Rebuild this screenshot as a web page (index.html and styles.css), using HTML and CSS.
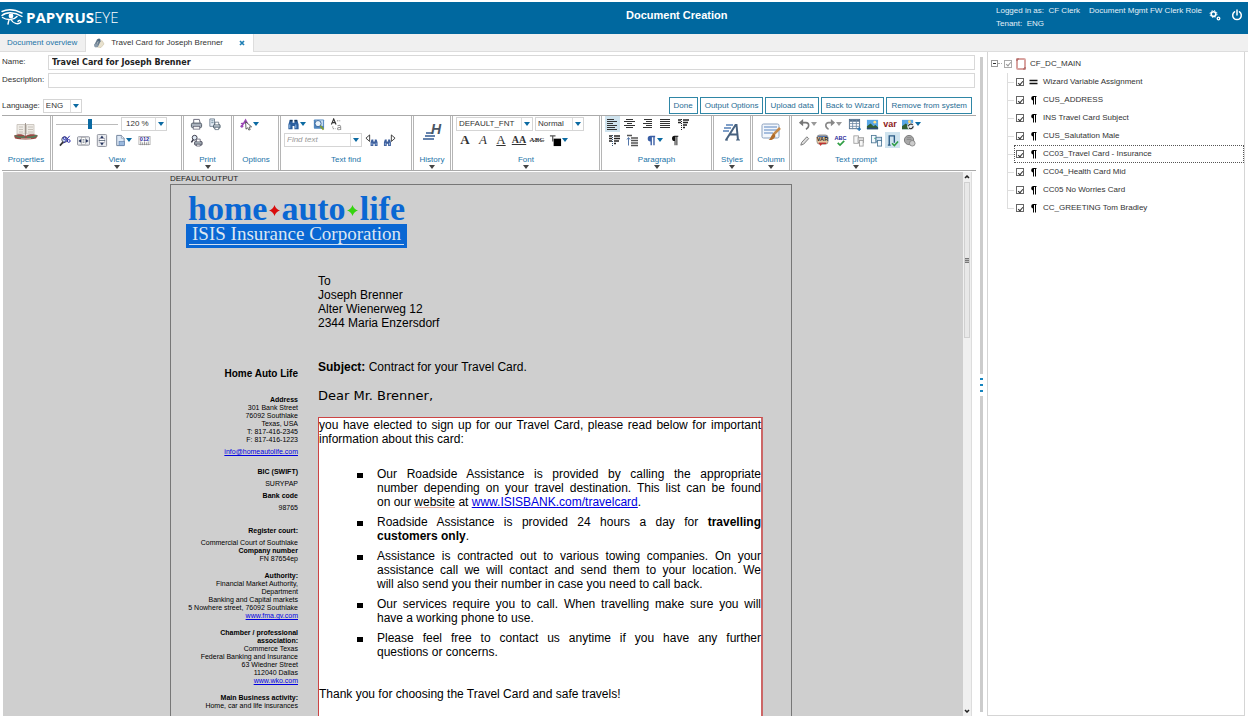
FILE: index.html
```html
<!DOCTYPE html>
<html lang="en">
<head>
<meta charset="utf-8">
<title>Document Creation</title>
<link rel="stylesheet" href="styles.css">
</head>
<body>
<header class="header">
  <div class="brand">
    <svg class="brand-eye" viewBox="0 0 22 18" fill="none" stroke="#fff" stroke-width="1.4" stroke-linecap="round"><path d="M1 3.500C6 1 13 1 21 5M1 7.500C5 4 13 3.500 21 8.500M1.500 9.500C6 12.500 13 12 16 8.500M8 11.500L7 16M10 11.500C12 15.500 17 17 19.500 14.500C20.500 12.500 17.500 11.500 17 13.500"/><circle cx="10" cy="8" r="2.400" fill="#fff" stroke="none"/></svg>
    <span class="brand-name">PAPYRUS<span class="brand-thin">EYE</span></span>
  </div>
  <h1 class="title">Document Creation</h1>
  <div class="user">
    <div class="user-text">
      <div class="user-line"><span>Logged in as:&nbsp; CF Clerk</span><span>Document Mgmt FW Clerk Role</span></div>
      <div>Tenant:&nbsp; ENG</div>
    </div>
    <button class="head-btn" aria-label="Settings"><svg width="12" height="12" viewBox="0 0 12 12" fill="none" stroke="#fff"><circle cx="4.500" cy="5" r="2.300" stroke-width="1.600"/><circle cx="4.500" cy="5" r="3.500" stroke-width="1" stroke-dasharray="1.400 1.350"/><circle cx="9.500" cy="9.500" r="1.300" stroke-width="1.300"/></svg></button>
    <button class="head-btn" aria-label="Log out"><svg width="12" height="12" viewBox="0 0 12 12" fill="none" stroke="#fff" stroke-width="1.500" stroke-linecap="round"><path d="M3.500 2.800A4.300 4.300 0 1 0 8.500 2.800M6 1V6"/></svg></button>
  </div>
</header>

<nav class="tabs">
  <a class="tab" href="#overview">Document overview</a>
  <div class="tab tab-active">
    <svg width="12" height="12" viewBox="0 0 12 12"><path d="M5 6L9 3.500L11 7L8 10.500L4 10Z" fill="#e9e2cf" stroke="#c9bfa5" stroke-width=".6"/><path d="M2 8.500L5 2.500M4 9.500L7 3.500" stroke="#6a7d8f" stroke-width="1.800"/><circle cx="3" cy="8.500" r="1.900" fill="#8a9bab"/><circle cx="6" cy="3" r="1.600" fill="#52687c"/></svg>
    <a class="tab-link" href="#travel">Travel Card for Joseph Brenner</a>
    <button class="tab-close" aria-label="Close tab"><svg width="6" height="6" viewBox="0 0 6 6" stroke="#1f7fb5" stroke-width="1.700"><path d="M1 1L5 5M5 1L1 5"/></svg></button>
  </div>
</nav>

<main class="work">
  <section class="editor">
    <form class="form">
      <label for="name">Name:</label>
      <input class="field field-name" id="name" type="text" value="Travel Card for Joseph Brenner">
      <label for="desc">Description:</label>
      <input class="field" id="desc" type="text">
    </form>
    <div class="actions">
      <label for="lang">Language:</label>
      <span class="combo combo-lang"><select id="lang"><option>ENG</option></select><svg class="arrow" viewBox="0 0 6 4"><path d="M0 0H6L3 4Z"/></svg></span>
      <div class="action-list">
        <button class="action">Done</button>
        <button class="action">Output Options</button>
        <button class="action">Upload data</button>
        <button class="action">Back to Wizard</button>
        <button class="action">Remove from system</button>
      </div>
    </div>

    <div class="ribbon">
      <section class="group">
        <div class="big"><button class="big-btn" aria-label="Properties"><svg width="26" height="18" viewBox="0 0 26 18"><path d="M4 1.500H12V11H4ZM13.500 1.500H21V11H13.500Z" fill="#eeebe6" stroke="#c4beb5" stroke-width=".8"/><path d="M12.500 0V13" stroke="#8b8178" stroke-width=".8"/><path d="M6 4H10M15 4H20M6 6.500H10M15 6.500H20M6 9H10M15 9H20" stroke="#bdb6ad" stroke-width=".8"/><path d="M1 12.500C6 10.500 9 11 12.500 13C16 11 20 10.500 25 12.500L23 15.500C17 17 8 17 2 15.500Z" fill="#9a4a44"/><path d="M2 12.500C5 14.500 9 14.500 12 13.800M14 14C18 14.800 21 14 24 12.500" fill="none" stroke="#4f7f5c" stroke-width="1.500"/><path d="M8 16H18" stroke="#d8cfc4"/></svg></button></div>
        <h2 class="label">Properties</h2><svg class="more" viewBox="0 0 6 4"><path d="M0 0H6L3 4Z"/></svg>
      </section>
      <section class="group">
        <div class="row view-row">
          <input class="slider" type="range" min="0" max="220" value="120" aria-label="Zoom">
          <span class="combo combo-zoom"><select aria-label="Zoom level"><option>120 %</option></select><svg class="arrow" viewBox="0 0 6 4"><path d="M0 0H6L3 4Z"/></svg></span>
        </div>
        <div class="row">
          <button class="icon" aria-label="Zoom percent"><svg viewBox="0 0 14 14"><path d="M1 12.500L5 8" stroke="#333" stroke-width="1.800"/><circle cx="6" cy="6" r="3" fill="#cfe0f5" stroke="#445"/><path d="M11.500 2L5 10" stroke="#2222aa"/><circle cx="6" cy="4.500" r="1.500" fill="none" stroke="#2222aa"/><circle cx="10.500" cy="7.500" r="1.500" fill="none" stroke="#2222aa"/></svg></button>
          <button class="icon" aria-label="Fit width"><svg viewBox="0 0 14 14"><rect x=".5" y="3" width="13" height="9" rx="1" fill="#e9ebef" stroke="#8a8f99"/><rect x="5" y="4" width="4" height="7" fill="#fff" stroke="#999" stroke-width=".6"/><path d="M1.500 7.500L4.500 5.500V9.500ZM12.500 7.500L9.500 5.500V9.500Z" fill="#26355f"/><path d="M6 6H8M6 7.500H8M6 9H8" stroke="#456" stroke-width=".7"/></svg></button>
          <button class="icon" aria-label="Fit height"><svg viewBox="0 0 14 14"><rect x="2.500" y=".5" width="10" height="13" rx="1" fill="#e9ebef" stroke="#8a8f99"/><rect x="4.500" y="5" width="6" height="4" fill="#fff" stroke="#99a" stroke-width=".6"/><path d="M7.500 1.500L9.500 4.500H5.500ZM7.500 12.500L9.500 9.500H5.500Z" fill="#26355f"/><path d="M4 7H11" stroke="#456" stroke-width=".8"/></svg></button>
          <button class="icon icon-wide" aria-label="Page view"><svg viewBox="0 0 14 14"><path d="M4 1.500H9L12 4.500V12.500H4Z" fill="#dde8f5" stroke="#6d7f99"/><path d="M9 1.500V4.500H12" fill="#fff" stroke="#6d7f99" stroke-width=".7"/><rect x="6.500" y="8" width="6" height="4.500" fill="#9bb9dd" stroke="#5577a5" stroke-width=".6"/></svg><svg class="arrow" viewBox="0 0 6 4"><path d="M0 0H6L3 4Z"/></svg></button>
          <button class="icon" aria-label="Ruler"><svg viewBox="0 0 14 14"><rect x="1" y="2.500" width="12" height="9" fill="#fff" stroke="#999" stroke-width=".7"/><path d="M3 12V8M5 12V9M7 12V8M9 12V9M11 12V8" stroke="#777" stroke-width=".8"/><text class="glyph-ruler" x="7" y="7">012</text></svg></button>
        </div>
        <h2 class="label">View</h2><svg class="more" viewBox="0 0 6 4"><path d="M0 0H6L3 4Z"/></svg>
      </section>
      <section class="group">
        <div class="row">
          <button class="icon" aria-label="Print"><svg viewBox="0 0 14 14"><path d="M4 6V1.500H10L11 6" fill="#fff" stroke="#667"/><rect x="1.500" y="5.500" width="11" height="5" rx="1.500" fill="#aab2bc" stroke="#4b5561"/><rect x="3.500" y="9" width="7" height="3" fill="#f5f5f5" stroke="#667" stroke-width=".8"/></svg></button>
          <button class="icon" aria-label="Print document"><svg viewBox="0 0 14 14"><path d="M2 1H7V9H2Z" fill="#e4ecf5" stroke="#678" stroke-width=".9"/><path d="M3.500 3H6M3.500 5H6" stroke="#578" stroke-width=".8"/><rect x="6" y="7" width="7" height="4" rx="1" fill="#aab6c0" stroke="#455863"/><path d="M7.500 7V4.500H11.500V7M7.500 10H11.500V12.500H7.500Z" fill="#fff" stroke="#567" stroke-width=".8"/></svg></button>
        </div>
        <div class="row">
          <button class="icon" aria-label="Print preview"><svg viewBox="0 0 14 14"><circle cx="5" cy="4" r="2.600" fill="#dfe9f3" stroke="#334"/><path d="M3.500 6L1.500 9" stroke="#334" stroke-width="1.600"/><rect x="5" y="8" width="8" height="4" rx="1" fill="#9ba5ad" stroke="#445"/><path d="M7 8V5.500H11V8M7 11H11V13H7Z" fill="#fff" stroke="#556" stroke-width=".8"/></svg></button>
        </div>
        <h2 class="label">Print</h2><svg class="more" viewBox="0 0 6 4"><path d="M0 0H6L3 4Z"/></svg>
      </section>
      <section class="group">
        <div class="row">
          <button class="icon icon-wide" aria-label="Options"><svg viewBox="0 0 14 14"><path d="M2 9L6 2L8 6M1 6L7 5" fill="none" stroke="#9a45b5" stroke-width="1.500"/><circle cx="2" cy="9" r="1.500" fill="#9a45b5"/><path d="M6 4L12.500 9.500L9.800 9.800L11 12.500L9.500 13L8.300 10.500L6.500 12Z" fill="#fff" stroke="#333" stroke-width=".8"/></svg><svg class="arrow" viewBox="0 0 6 4"><path d="M0 0H6L3 4Z"/></svg></button>
        </div>
        <h2 class="label label-plain">Options</h2>
      </section>
      <section class="group">
        <div class="row">
          <button class="icon icon-wide" aria-label="Find"><svg viewBox="0 0 14 14"><path d="M3 2H6V5H8V2H11L12.500 7V12H8V8.500H6V12H1.500V7Z" fill="#2c5f9e"/><path d="M3 7V11M9.500 7V11" stroke="#9cc4ee"/><path d="M3 3H6M8 3H11" stroke="#123"/></svg><svg class="arrow" viewBox="0 0 6 4"><path d="M0 0H6L3 4Z"/></svg></button>
          <button class="icon" aria-label="Find in view"><svg viewBox="0 0 14 14"><rect x="2" y="1.500" width="11" height="10" rx="1" fill="#4f86c0"/><rect x="4" y="2.500" width="8" height="6" fill="#c5dcef"/><circle cx="6.500" cy="6" r="3.300" fill="#e8f2fa" stroke="#35639a"/><path d="M9 8.500L12.500 12.500" stroke="#7f9b37" stroke-width="2"/></svg></button>
          <button class="icon" aria-label="Replace"><svg viewBox="0 0 14 14"><path d="M1.500 7L4 1L6.500 7M2.500 5H5.500" fill="none" stroke="#333" stroke-width="1.200"/><path d="M7.500 3H11M3 9V11.500H6" fill="none" stroke="#888" stroke-dasharray="1.500 1"/><path d="M8 8.500Q11.500 7 11.500 9.500V13M11.500 10Q8 10 8 11.800Q9 13.500 11.500 12" fill="none" stroke="#999" stroke-width="1.100"/></svg></button>
        </div>
        <div class="row">
          <span class="combo combo-find"><input class="find" type="text" placeholder="Find text" aria-label="Find text"><svg class="arrow" viewBox="0 0 6 4"><path d="M0 0H6L3 4Z"/></svg></span>
          <button class="icon" aria-label="Find previous"><svg viewBox="0 0 14 14"><path d="M5 1V8L1 4.500Z" fill="#fff" stroke="#222" stroke-width=".9"/><path d="M7 6H9V8H10.500V6H12.500L13.500 9V13H10.500V10.500H9V13H6V9Z" fill="#3d5f9c"/><path d="M7.500 9.500V12M12 9.500V12" stroke="#a8c5ee" stroke-width=".8"/></svg></button>
          <button class="icon" aria-label="Find next"><svg viewBox="0 0 14 14"><path d="M9 1V8L13 4.500Z" fill="#fff" stroke="#222" stroke-width=".9"/><path d="M2 6H4V8H5.500V6H7.500L8.500 9V13H5.500V10.500H4V13H1V9Z" fill="#3d5f9c"/><path d="M2.500 9.500V12M7 9.500V12" stroke="#a8c5ee" stroke-width=".8"/></svg></button>
        </div>
        <h2 class="label label-plain">Text find</h2>
      </section>
      <section class="group">
        <div class="big"><button class="big-btn" aria-label="History"><svg width="20" height="20" viewBox="0 0 20 20"><path d="M4 11H11M3 14H13M1 17H12" stroke="#6583ad" stroke-width="2"/><text class="glyph-history" x="9" y="12">H</text></svg></button></div>
        <h2 class="label">History</h2><svg class="more" viewBox="0 0 6 4"><path d="M0 0H6L3 4Z"/></svg>
      </section>
      <section class="group">
        <div class="row font-row">
          <span class="combo combo-font"><select aria-label="Font"><option>DEFAULT_FNT</option></select><svg class="arrow" viewBox="0 0 6 4"><path d="M0 0H6L3 4Z"/></svg></span>
          <span class="combo combo-style"><select aria-label="Font style"><option>Normal</option></select><svg class="arrow" viewBox="0 0 6 4"><path d="M0 0H6L3 4Z"/></svg></span>
        </div>
        <div class="row">
          <button class="icon serif-a bold">A</button>
          <button class="icon serif-a italic">A</button>
          <button class="icon serif-a under">A</button>
          <button class="icon serif-aa under">AA</button>
          <button class="icon serif-abc">ABC</button>
          <button class="icon icon-wide" aria-label="Text colour"><svg viewBox="0 0 14 14"><path d="M1 2H7M4 2V8" stroke="#555" stroke-width="1.300"/><rect x="5" y="5" width="8" height="8" fill="#000"/></svg><svg class="arrow" viewBox="0 0 6 4"><path d="M0 0H6L3 4Z"/></svg></button>
        </div>
        <h2 class="label">Font</h2><svg class="more" viewBox="0 0 6 4"><path d="M0 0H6L3 4Z"/></svg>
      </section>
      <section class="group">
        <div class="row">
          <button class="icon icon-on" aria-label="Align left"><svg viewBox="0 0 13 13" stroke="#333"><path d="M1 1.500H8M1 3.500H11M1 5.500H7M1 7.500H11M1 9.500H9M1 11.500H11"/></svg></button>
          <button class="icon" aria-label="Centre"><svg viewBox="0 0 13 13" stroke="#333"><path d="M3 1.500H10M1 3.500H12M4 5.500H9M1 7.500H12M3 9.500H10"/></svg></button>
          <button class="icon" aria-label="Align right"><svg viewBox="0 0 13 13" stroke="#333"><path d="M3 1.500H11M5 3.500H11M2 5.500H11M5 7.500H11M2 9.500H11"/></svg></button>
          <button class="icon" aria-label="Justify"><svg viewBox="0 0 13 13" stroke="#333"><path d="M1 1.500H11M1 3.500H11M1 5.500H11M1 7.500H11M1 9.500H11"/></svg></button>
          <button class="icon" aria-label="List"><svg viewBox="0 0 13 13" stroke="#222"><path d="M1 2H4M6 2H12M6 4.500H11M1 4.500H4M6 7H10M6 9.500H8" stroke-width="1.500"/><path d="M4.500 1V12" stroke-dasharray="1 1"/></svg></button>
        </div>
        <div class="row">
          <button class="icon" aria-label="Bullets"><svg viewBox="0 0 13 13" stroke="#222"><path d="M1 2H4M6 2H12M1 4.500H4M6 4.500H12M1 7H4M6 7H11M6 9.500H8" stroke-width="1.300"/><path d="M4.500 1V12" stroke="#357" stroke-dasharray="1 1"/></svg></button>
          <button class="icon" aria-label="Indent"><svg viewBox="0 0 13 13" stroke="#555"><path d="M1 1.500H6M5 4H12M5 6.500H12M5 9H12M5 11.500H12" stroke-width="1.300"/><path d="M2.500 4V11.500M1 5.500L2.500 3.500L4 5.500" fill="none" stroke="#57a"/></svg></button>
          <button class="icon icon-wide" aria-label="Paragraph style"><svg viewBox="0 0 14 14"><path d="M12 2H7A3 3 0 0 0 7 8V12H8.500V3.500H10V12H11.500V3.500H12Z" fill="#3a5ea5"/></svg><svg class="arrow" viewBox="0 0 6 4"><path d="M0 0H6L3 4Z"/></svg></button>
          <button class="icon" aria-label="Show marks"><svg viewBox="0 0 14 14"><path d="M10 2H6A2.600 2.600 0 0 0 6 7.500V12H7V3H8V12H9V3H10Z" fill="#111"/></svg></button>
        </div>
        <h2 class="label">Paragraph</h2><svg class="more" viewBox="0 0 6 4"><path d="M0 0H6L3 4Z"/></svg>
      </section>
      <section class="group">
        <div class="big"><button class="big-btn" aria-label="Styles"><svg width="20" height="20" viewBox="0 0 20 20"><path d="M4 3H11M2 6H9M1 9H7" stroke="#7f9fc8" stroke-width="1.800"/><path d="M4 18L13.500 3H14.500L16 18M8 12.500H16" fill="none" stroke="#47617f" stroke-width="2"/><path d="M14 18H18M3 18H6" stroke="#47617f"/></svg></button></div>
        <h2 class="label">Styles</h2><svg class="more" viewBox="0 0 6 4"><path d="M0 0H6L3 4Z"/></svg>
      </section>
      <section class="group">
        <div class="big"><button class="big-btn" aria-label="Column"><svg width="20" height="20" viewBox="0 0 20 20"><rect x="1" y="2" width="17" height="14" rx="1.500" fill="#f3f7fc" stroke="#8aa0bd"/><path d="M3 5H16M3 8H16M3 11H12" stroke="#5b86bf" stroke-width="1.200"/><path d="M19 6L12 13" stroke="#c58a4a" stroke-width="2.500"/><path d="M13 11.500L14.500 14C13 17.500 10 18.500 7.500 18C10 17 9.500 13 13 11.500Z" fill="#b06c2a"/></svg></button></div>
        <h2 class="label">Column</h2><svg class="more" viewBox="0 0 6 4"><path d="M0 0H6L3 4Z"/></svg>
      </section>
      <section class="group group-last">
        <div class="row">
          <button class="icon icon-wide" aria-label="Undo"><svg viewBox="0 0 14 14"><path d="M3 5H8.500C12.500 5 12.500 10.500 8.500 12" fill="none" stroke="#777" stroke-width="1.700"/><path d="M1 5L5.500 1V9Z" fill="#777"/></svg><svg class="arrow arrow-off" viewBox="0 0 6 4"><path d="M0 0H6L3 4Z"/></svg></button>
          <button class="icon icon-wide" aria-label="Redo"><svg viewBox="0 0 14 14"><path d="M11 5H6C2 5 2 10.500 6 12" fill="none" stroke="#888" stroke-width="1.700"/><path d="M13 5L8.500 1V9Z" fill="#888"/></svg><svg class="arrow arrow-off" viewBox="0 0 6 4"><path d="M0 0H6L3 4Z"/></svg></button>
          <button class="icon" aria-label="Insert table"><svg viewBox="0 0 14 14"><rect x="1.500" y="1.500" width="11" height="10" fill="#fff" stroke="#55708c"/><path d="M1.500 3H12.500" stroke="#55708c" stroke-width="2"/><path d="M5 2V12M9 2V12M2 6H12M2 9H12" stroke="#6f8aa5" stroke-width=".9"/><path d="M10 12H14M12 10V14" stroke="#2474b5" stroke-width="1.300"/></svg></button>
          <button class="icon" aria-label="Insert image"><svg viewBox="0 0 14 14"><rect x="1" y="2" width="12" height="10" fill="#58a7e6"/><circle cx="9.500" cy="4.500" r="1.500" fill="#ffe48a"/><path d="M1 9L5 6L8 9L10 7.500L13 10V12H1Z" fill="#315f35"/><path d="M1 10.500H13V12H1Z" fill="#2c4a77"/></svg></button>
          <button class="icon var">var</button>
          <button class="icon icon-wide" aria-label="Replace image"><svg viewBox="0 0 14 14"><rect x="0" y="2" width="12" height="10" fill="#58a7e6"/><circle cx="8" cy="4" r="1.500" fill="#ffd76a"/><path d="M0 9L4 6L8 9V12H0Z" fill="#315f35"/><circle cx="9.500" cy="9" r="3.800" fill="#e9eef2"/><path d="M7 9A2.500 2.500 0 0 1 11.500 7.500M12 9A2.500 2.500 0 0 1 7.500 10.500" fill="none" stroke="#222" stroke-width="1.200"/></svg><svg class="arrow" viewBox="0 0 6 4"><path d="M0 0H6L3 4Z"/></svg></button>
        </div>
        <div class="row">
          <button class="icon" aria-label="Edit"><svg viewBox="0 0 14 14"><path d="M3 12L4 9L9.500 3L11.500 5L6 11Z" fill="#ddd" stroke="#777"/></svg></button>
          <button class="icon" aria-label="Variable"><svg viewBox="0 0 14 14"><rect x="1" y="1" width="12" height="10" rx="3" fill="#e7c9a3" stroke="#777" stroke-width=".7"/><path d="M2 2.500H12" stroke="#5577aa" stroke-width="1.500"/><path d="M3 10L5 13L7 10" fill="#c33"/><path d="M3 10H11" stroke="#b33" stroke-width="1.500"/><text class="glyph-var" x="7" y="8">VAR</text></svg></button>
          <button class="icon" aria-label="Spell check"><svg viewBox="0 0 14 14"><text class="glyph-abc" x="7" y="6">ABC</text><path d="M4 9.500L6.500 12L11 7.500" fill="none" stroke="#2f9e44" stroke-width="1.800"/></svg></button>
          <button class="icon" aria-label="Copy block"><svg viewBox="0 0 14 14" fill="#f7f7f7" stroke="#999" stroke-width=".9"><rect x="2" y="2" width="5" height="8"/><rect x="6.500" y="4" width="6" height="5" fill="#ddd"/><rect x="8" y="7" width="4" height="6"/></svg></button>
          <button class="icon" aria-label="Paste block"><svg viewBox="0 0 14 14" fill="#f2f8fd" stroke="#4b7694" stroke-width=".9"><rect x="1.500" y="1.500" width="5" height="8"/><path d="M4.500 4.500L8 6" stroke="#2a6"/><rect x="6.500" y="3.500" width="6" height="5" fill="#cfe0ef"/><rect x="8" y="7" width="4.500" height="6"/></svg></button>
          <button class="icon icon-on" aria-label="Check text"><svg viewBox="0 0 14 14"><path d="M3.500 12V2H9V9.500M2 12H5" fill="none" stroke="#2c5c86" stroke-width="1.500"/><path d="M6.500 10L9 12.500L13 8" fill="none" stroke="#2f9e44" stroke-width="1.600"/></svg></button>
          <button class="icon" aria-label="Comment"><svg viewBox="0 0 14 14"><circle cx="6.500" cy="6.500" r="5" fill="#a9a9a9" stroke="#777"/><circle cx="10" cy="10" r="3" fill="#ccc" stroke="#777" stroke-width=".8"/><path d="M4 4H9M4 6H9" stroke="#888"/></svg></button>
        </div>
        <h2 class="label">Text prompt</h2><svg class="more" viewBox="0 0 6 4"><path d="M0 0H6L3 4Z"/></svg>
      </section>
    </div>

    <div class="viewer">
      <div class="canvas">
        <div class="output">
          <div class="output-name">DEFAULTOUTPUT</div>
          <article class="paper">
            <div class="logo">
              <div class="logo-top"><span>home</span><svg class="diamond red" viewBox="0 0 12 12"><path d="M6 0Q7.500 4.500 12 6Q7.500 7.500 6 12Q4.500 7.500 0 6Q4.500 4.500 6 0Z M6 2L10 6L6 10L2 6Z"/></svg><span>auto</span><svg class="diamond green" viewBox="0 0 12 12"><path d="M6 0Q7.500 4.500 12 6Q7.500 7.500 6 12Q4.500 7.500 0 6Q4.500 4.500 6 0Z M6 2L10 6L6 10L2 6Z"/></svg><span>life</span></div>
              <div class="logo-bar"><div class="logo-line">ISIS Insurance Corporation</div></div>
            </div>
            <aside class="side">
              <h3 class="side-title">Home Auto Life</h3>
              <p class="gap-16"><b>Address</b><br>301 Bank Street<br>76092 Southlake<br>Texas, USA<br>T: 817-416-2345<br>F: 817-416-1223</p>
              <p class="gap-4"><a href="#mail">info@homeautolife.com</a></p>
              <p class="gap-12"><b>BIC (SWIFT)</b></p>
              <p class="gap-4">SURYPAP</p>
              <p class="gap-4"><b>Bank code</b></p>
              <p class="gap-4">98765</p>
              <p class="gap-16"><b>Register court:</b></p>
              <p class="gap-4">Commercial Court of Southlake<br><b>Company number</b><br>FN 87654ep</p>
              <p class="gap-8"><b>Authority:</b><br>Financial Market Authority,<br>Department<br>Banking and Capital markets<br>5 Nowhere street, 76092 Southlake<br><a href="#fma">www.fma.gv.com</a></p>
              <p class="gap-8"><b>Chamber / professional<br>association:</b><br>Commerce Texas<br>Federal Banking and Insurance<br>63 Wiedner Street<br>112040 Dallas<br><a href="#wko">www.wko.com</a></p>
              <p class="gap-8"><b>Main Business activity:</b><br>Home, car and life insurances</p>
            </aside>
            <div class="letter">
              <address class="to">To<br>Joseph Brenner<br>Alter Wienerweg 12<br>2344 Maria Enzersdorf</address>
              <p class="subject"><b>Subject:</b> Contract for your Travel Card.</p>
              <p class="dear">Dear Mr. Brenner,</p>
              <div class="block">
                <p><span class="full">you have elected to sign up for our Travel Card, please read below for important</span> information about this card:</p>
                <ul class="points">
                  <li><div><span class="full">Our Roadside Assistance is provided by calling the appropriate</span> <span class="full">number depending on your travel destination. This list can be found</span> on our <span class="spell">website</span> at <a href="#travelcard">www.ISISBANK.com/travelcard</a>.</div></li>
                  <li><div><span class="full">Roadside Assistance is provided 24 hours a day for <b>travelling</b></span> <b>customers only</b>.</div></li>
                  <li><div><span class="full">Assistance is contracted out to various towing companies. On your</span> <span class="full">assistance call we will contact and send them to your location. We</span> will also send you their number in case you need to call back.</div></li>
                  <li><div><span class="full">Our services require you to call. When travelling make sure you will</span> have a working phone to use.</div></li>
                  <li><div><span class="full">Please feel free to contact us anytime if you have any further</span> questions or concerns.</div></li>
                </ul>
                <p>Thank you for choosing the Travel Card and safe travels!</p>
              </div>
            </div>
          </article>
        </div>
      </div>
      <div class="scroll">
        <svg class="scroll-arrow" viewBox="0 0 6 4"><path d="M1 3L3 1L5 3"/></svg>
        <div class="thumb"><div class="grip"></div></div>
        <svg class="scroll-arrow scroll-end" viewBox="0 0 6 4"><path d="M1 1L3 3L5 1"/></svg>
      </div>
    </div>
  </section>

  <div class="splitter"><i class="bar"></i><span class="dots"><i></i><i></i><i></i></span><i class="bar"></i></div>

  <aside class="tree">
    <div class="root">
      <button class="toggle" aria-label="Collapse"></button><i class="stub"></i>
      <label class="node"><input class="check check-off" type="checkbox" checked><svg width="10" height="12" viewBox="0 0 10 12"><rect x="1" y="1" width="8" height="10" rx="1" fill="#fff" stroke="#d9a3a0" stroke-width="2"/><path d="M1 3V1H3M7 11H9V9" fill="none" stroke="#a8605e" stroke-width="1.200"/></svg>CF_DC_MAIN</label>
    </div>
    <ul class="nodes">
      <li><i class="branch"></i><label class="node"><input class="check" type="checkbox" checked><svg class="mark" viewBox="0 0 8 10"><path d="M0 3.500H8M0 6.500H8" stroke="#111" stroke-width="1.600"/></svg>Wizard Variable Assignment</label></li>
      <li><i class="branch"></i><label class="node"><input class="check" type="checkbox" checked><svg class="mark" viewBox="0 0 8 10"><path d="M7 1H3.500A2.300 2.300 0 0 0 3.500 5.500V9.500H4.500V2H5.500V9.500H6.500V2H7Z"/></svg>CUS_ADDRESS</label></li>
      <li><i class="branch"></i><label class="node"><input class="check" type="checkbox" checked><svg class="mark" viewBox="0 0 8 10"><path d="M7 1H3.500A2.300 2.300 0 0 0 3.500 5.500V9.500H4.500V2H5.500V9.500H6.500V2H7Z"/></svg>INS Travel Card Subject</label></li>
      <li><i class="branch"></i><label class="node"><input class="check" type="checkbox" checked><svg class="mark" viewBox="0 0 8 10"><path d="M7 1H3.500A2.300 2.300 0 0 0 3.500 5.500V9.500H4.500V2H5.500V9.500H6.500V2H7Z"/></svg>CUS_Salutation Male</label></li>
      <li><i class="branch"></i><label class="node node-selected"><input class="check" type="checkbox" checked><svg class="mark" viewBox="0 0 8 10"><path d="M7 1H3.500A2.300 2.300 0 0 0 3.500 5.500V9.500H4.500V2H5.500V9.500H6.500V2H7Z"/></svg>CC03_Travel Card - Insurance</label></li>
      <li><i class="branch"></i><label class="node"><input class="check" type="checkbox" checked><svg class="mark" viewBox="0 0 8 10"><path d="M7 1H3.500A2.300 2.300 0 0 0 3.500 5.500V9.500H4.500V2H5.500V9.500H6.500V2H7Z"/></svg>CC04_Health Card Mid</label></li>
      <li><i class="branch"></i><label class="node"><input class="check" type="checkbox" checked><svg class="mark" viewBox="0 0 8 10"><path d="M7 1H3.500A2.300 2.300 0 0 0 3.500 5.500V9.500H4.500V2H5.500V9.500H6.500V2H7Z"/></svg>CC05 No Worries Card</label></li>
      <li><i class="branch branch-last"></i><label class="node"><input class="check" type="checkbox" checked><svg class="mark" viewBox="0 0 8 10"><path d="M7 1H3.500A2.300 2.300 0 0 0 3.500 5.500V9.500H4.500V2H5.500V9.500H6.500V2H7Z"/></svg>CC_GREETING Tom Bradley</label></li>
    </ul>
  </aside>
</main>
</body>
</html>
```
FILE: styles.css
```css
* { box-sizing: border-box; }
body {
  margin: 0;
  padding: 2px 0;
  height: 100vh;
  display: flex;
  flex-direction: column;
  background: #fff;
  color: #333;
  font: 8px/12px "Liberation Sans", Arial, sans-serif;
}
h1, h2, h3, p, ul { margin: 0; padding: 0; }
ul { list-style: none; }
button, input, select { font: inherit; color: inherit; margin: 0; padding: 0; border-radius: 0; }
button { background: none; border: 0; cursor: pointer; }
svg { display: block; flex: none; }

/* Header */
.header { flex: none; height: 32px; display: flex; background: #00689f; color: #fff; }
.brand { flex: 0 0 50%; display: flex; align-items: center; gap: 3px; padding: 0 0 3px 1px; }
.brand-eye { width: 22px; height: 18px; }
.brand-name { font: bold 15px/18px "Open Sans", "Noto Sans", sans-serif; }
.brand-thin { font-weight: 300; }
.title { padding-left: 2px; font-size: 11px; line-height: 26px; }
.user { margin-left: auto; flex: 0 0 252px; display: flex; align-items: flex-start; padding-top: 2px; color: #e3f0f8; }
.user-text { flex: 1; }
.user-line { display: flex; gap: 9px; white-space: nowrap; }
.user-text { line-height: 13px; }
.head-btn { width: 22px; padding: 5px; }

/* Tabs */
.tabs { flex: none; height: 18px; display: flex; background: #f0f0f0; border-bottom: 1px solid #ddd; line-height: 18px; }
.tab { padding: 0 8px 0 7px; color: #1b74a8; text-decoration: none; border-right: 1px solid #ddd; }
.tab-active { display: flex; align-items: center; gap: 6px; height: 18px; background: #fff; }
.tab-link { color: #333; text-decoration: none; }
.tab-close { padding: 0 0 0 10px; }

/* Work area */
.work { flex: 1; min-height: 0; display: grid; grid-template-columns: minmax(0, 1fr) 11px 258px; padding-right: 3px; }
.editor { display: flex; flex-direction: column; min-height: 0; padding-left: 2px; }
.form { display: grid; grid-template-columns: 46px 1fr; gap: 3px 0; padding: 3px 1px 0 0; line-height: 14px; }
.form label { white-space: nowrap; }
.field { height: 15px; min-width: 0; padding: 0 3px; border: 1px solid #d8d8d8; background: #fff; }
.field-name { font: bold 8px/13px "DejaVu Sans", Verdana, sans-serif; color: #222; }
.actions { display: flex; align-items: center; gap: 3px; padding: 9px 4px 1px 0; }
.action-list { margin-left: auto; display: flex; gap: 2px; }
.action { height: 17px; padding: 0 4px; border: 1px solid #2f86a6; color: #1f6d94; background: #fff; white-space: nowrap; }

.combo { position: relative; display: inline-flex; height: 14px; border: 1px solid #d5d5d5; background: #fff; }
.combo select, .find { appearance: none; width: 100%; min-width: 0; padding: 0 14px 0 2px; border: 0; background: none; line-height: 12px; outline: 0; }
.combo .arrow { position: absolute; right: 2px; top: 4px; pointer-events: none; }
.combo::after { content: ""; position: absolute; right: 10px; top: 0; bottom: 0; border-left: 1px solid #ddd; }
.arrow { width: 6px; height: 4px; fill: #0b6aa2; }
.arrow-off { fill: #999; }
.combo-lang { width: 39px; }
.combo-zoom { width: 46px; }
.combo-zoom select { padding-left: 4px; }
.combo-find { width: 78px; }
.combo-font { width: 77px; }
.combo-style { width: 49px; }
.find::placeholder { color: #999; font-style: italic; opacity: 1; }

/* Ribbon */
.ribbon {
  flex: none;
  height: 56px;
  display: grid;
  grid-template-columns: 51px 131px 50px 47px 133px 39px 149px 112px 39px 39px 128px;
  border-top: 1px solid #aaa;
  border-bottom: 1px solid #aaa;
  overflow: hidden;
}
.group { display: flex; flex-direction: column; align-items: flex-start; padding: 0 3px 1px; border-right: 3px double #b5b5b5; }
.group-last { border-right: 0; }
.row { display: flex; align-items: center; height: 16px; }
.view-row { gap: 3px; }
.font-row { gap: 2px; }
.big { height: 32px; align-self: center; display: flex; align-items: center; }
.big-btn { display: block; }
.icon { width: 18px; height: 16px; display: flex; align-items: center; justify-content: center; }
.icon > svg:first-child { width: 13px; height: 13px; }
.icon-wide { width: 25px; }
.icon-on { background: #cfe3ee; width: 15px; }
.label { align-self: center; margin-top: auto; font-size: 8px; line-height: 11px; font-weight: normal; color: #1b74a8; white-space: nowrap; }
.label-plain { padding-bottom: 4px; }
.more { align-self: center; width: 6px; height: 4px; fill: #444; }
.slider { appearance: none; width: 62px; height: 12px; background: linear-gradient(#bbb, #bbb) center / 100% 1px no-repeat; }
.slider::-webkit-slider-thumb { appearance: none; width: 4px; height: 10px; background: #0b6aa2; }
.serif-a { font: 13px/14px "Liberation Serif", serif; color: #333; }
.serif-aa { font: bold 10px/14px "Liberation Serif", serif; color: #333; }
.serif-abc { font: bold 7px/14px "Liberation Serif", serif; color: #222; text-decoration: line-through #888; }
.bold { font-weight: bold; }
.italic { font-style: italic; }
.under { text-decoration: underline; }
.var { font-size: 9px; font-weight: bold; color: #8d2020; }
.glyph-ruler, .glyph-var, .glyph-abc { font: bold 6px "Liberation Sans", sans-serif; text-anchor: middle; fill: #2a2a9a; }
.glyph-var { fill: #222; }
.glyph-history { font: italic bold 14px "Liberation Sans", sans-serif; fill: #4a5563; }

/* Document viewer */
.viewer { flex: 1; min-height: 0; display: flex; margin: 1px 4px 0 1px; background: #cfcfcf; }
.canvas { flex: 1; overflow: hidden; display: flex; justify-content: center; padding: 2px 4px 0 0; }
.output { width: 622px; flex: none; }
.output-name { line-height: 10px; color: #222; }
.paper { border: 1px solid #777; border-bottom: 0; display: grid; grid-template-columns: 147px 445px; padding-bottom: 60px; color: #000; }
.logo { grid-column: 1 / -1; justify-self: start; width: 236px; padding: 8px 0 26px 15px; }
.logo-top { display: flex; align-items: center; justify-content: space-between; padding: 0 2px; font: bold 34px/31px "Liberation Serif", serif; color: #0a67d3; }
.logo-bar { padding: 0 3px 3px; background: #0a67d3; color: #dce6f2; font: 19px/20px "Liberation Serif", serif; text-align: center; }
.logo-line { border-bottom: 1px solid #cfdff2; white-space: nowrap; }
.diamond { width: 11px; height: 11px; margin-top: 4px; }
.red { fill: #d90d0d; }
.green { fill: #35d40f; }

.side { padding: 93px 20px 0 0; text-align: right; font-size: 7px; line-height: 8px; white-space: nowrap; }
.side-title { font-size: 10px; line-height: 14px; }
.side a, .letter a { color: #0000e0; }
.gap-4 { margin-top: 4px; }
.gap-8 { margin-top: 9px; }
.gap-12 { margin-top: 12px; }
.gap-16 { margin-top: 15px; }

.letter { font-size: 12px; line-height: 14px; }
.to { font-style: normal; }
.subject { margin-top: 30px; }
.dear { margin-top: 15px; font-family: "DejaVu Sans", Verdana, sans-serif; font-size: 13px; }
.block { margin-top: 14px; padding-bottom: 60px; border: 1px solid #c44; border-right: 2px solid #c66; background: #fff; }
.full { display: block; text-align: justify; text-align-last: justify; white-space: nowrap; }
.points { display: flex; flex-direction: column; gap: 6px; margin: 21px 0 28px; padding-left: 38px; }
.points li { display: grid; grid-template-columns: 20px 1fr; }
.points li::before { content: ""; width: 6px; height: 5px; margin-top: 6px; background: #000; }
.spell { text-decoration: underline #e7b0a0; }

.scroll { flex: none; width: 9px; display: flex; flex-direction: column; align-items: center; padding: 3px 0; background: #f0f0f0; border-right: 1px solid #ddd; }
.scroll-arrow { width: 6px; height: 4px; fill: none; stroke: #222; stroke-width: 1.500; }
.scroll-end { margin-top: auto; }
.thumb { width: 6px; height: 29%; margin-top: 3px; border: 1px solid #d0d0d0; background: #e8e8e8; display: flex; align-items: center; }
.grip { width: 4px; height: 5px; background: repeating-linear-gradient(#777 0 1px, #bbb 1px 2px); }

/* Splitter */
.splitter { display: flex; flex-direction: column; align-items: center; padding: 5px 0 4px; }
.bar { flex: 1; width: 3px; background: #ccc; }
.dots { display: flex; flex-direction: column; gap: 4px; padding: 4px 0; }
.dots i { width: 3px; height: 2px; background: #1785bf; }

/* Document tree */
.tree { border: 1px solid #d5d5d5; border-top: 0; padding-top: 2px; }
.root { display: flex; align-items: center; height: 19px; padding-left: 3px; }
.toggle { width: 7px; height: 7px; border: 1px solid #999; background: linear-gradient(#333, #333) center / 3px 1px no-repeat; }
.stub { width: 4px; border-top: 1px dotted #aaa; }
.root .node { gap: 4px; }
.nodes { padding-left: 19px; }
.nodes li { display: flex; height: 18px; }
.node { flex: 1; display: flex; align-items: center; gap: 5px; padding-left: 1px; white-space: nowrap; border: 1px dotted transparent; }
.node-selected { border-color: #555; }
.branch { width: 7px; background: linear-gradient(#ddd, #ddd) 0 0 / 1px 100% no-repeat, linear-gradient(#ddd, #ddd) 0 50% / 100% 1px no-repeat; }
.branch-last { background-size: 1px 50%, 100% 1px; }
.check { appearance: none; width: 8px; height: 8px; border: 1px solid #666; display: grid; place-items: center; }
.check::after { content: ""; width: 2px; height: 4px; border: solid #333; border-width: 0 1px 1px 0; rotate: 40deg; }
.check-off { border-color: #aaa; }
.check-off::after { border-color: #999; }
.mark { width: 9px; height: 10px; fill: #000; }
```
